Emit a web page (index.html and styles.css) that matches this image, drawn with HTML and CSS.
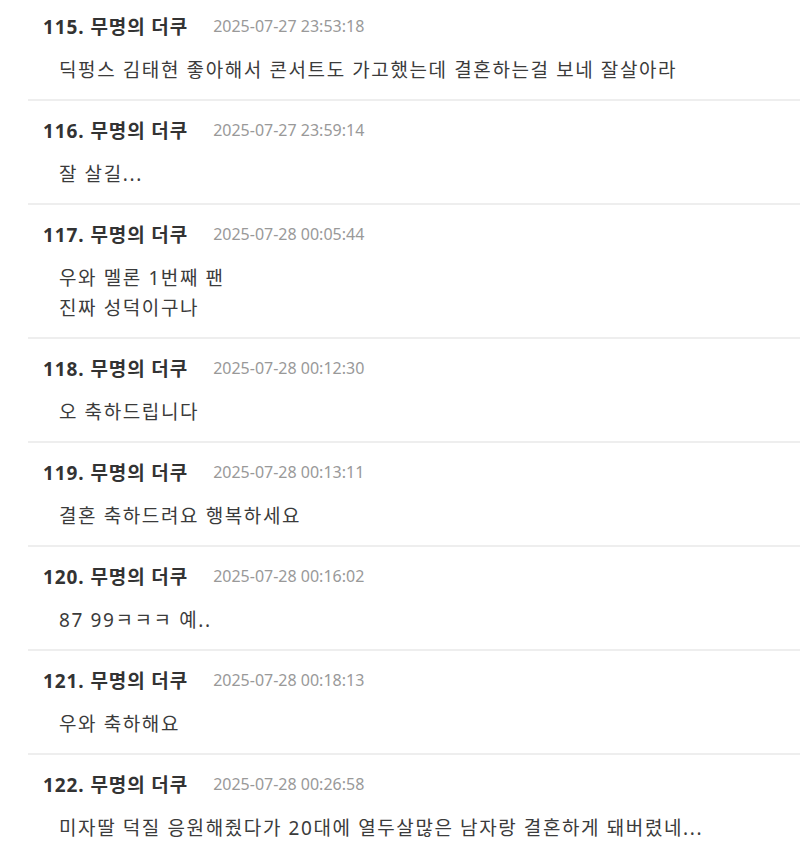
FILE: index.html
```html
<!doctype html>
<html lang="ko">
<head>
    <meta charset="UTF-8">
    <meta name="viewport" content="width=device-width, initial-scale=1.0">
    <title>댓글</title>
    <link rel="stylesheet" href="styles.css">
</head>
<body>
<div class="comment-list">
    <div class="comment">
        <div class="comment-head"><span class="comment-name">115. 무명의 더쿠</span><span class="comment-date">2025-07-27 23:53:18</span></div>
        <div class="comment-body">딕펑스 김태현 좋아해서 콘서트도 가고했는데 결혼하는걸 보네 잘살아라</div>
    </div>
    <div class="comment">
        <div class="comment-head"><span class="comment-name">116. 무명의 더쿠</span><span class="comment-date">2025-07-27 23:59:14</span></div>
        <div class="comment-body">잘 살길...</div>
    </div>
    <div class="comment">
        <div class="comment-head"><span class="comment-name">117. 무명의 더쿠</span><span class="comment-date">2025-07-28 00:05:44</span></div>
        <div class="comment-body">우와 멜론 1번째 팬<br>진짜 성덕이구나</div>
    </div>
    <div class="comment">
        <div class="comment-head"><span class="comment-name">118. 무명의 더쿠</span><span class="comment-date">2025-07-28 00:12:30</span></div>
        <div class="comment-body">오 축하드립니다</div>
    </div>
    <div class="comment">
        <div class="comment-head"><span class="comment-name">119. 무명의 더쿠</span><span class="comment-date">2025-07-28 00:13:11</span></div>
        <div class="comment-body">결혼 축하드려요 행복하세요</div>
    </div>
    <div class="comment">
        <div class="comment-head"><span class="comment-name">120. 무명의 더쿠</span><span class="comment-date">2025-07-28 00:16:02</span></div>
        <div class="comment-body">87 99ㅋㅋㅋ 예..</div>
    </div>
    <div class="comment">
        <div class="comment-head"><span class="comment-name">121. 무명의 더쿠</span><span class="comment-date">2025-07-28 00:18:13</span></div>
        <div class="comment-body">우와 축하해요</div>
    </div>
    <div class="comment">
        <div class="comment-head"><span class="comment-name">122. 무명의 더쿠</span><span class="comment-date">2025-07-28 00:26:58</span></div>
        <div class="comment-body">미자딸 덕질 응원해줬다가 20대에 열두살많은 남자랑 결혼하게 돼버렸네...</div>
    </div>
</div>
</body>
</html>
```

FILE: styles.css
```css
body {
    margin: 0;
    background-color: #ffffff;
    font-family: "Noto Sans", "Noto Sans CJK KR", sans-serif;
    overflow: hidden;
}
.comment-list {
    margin-top: -3px;
    margin-left: 28px;
}
.comment {
    padding: 15px 0 14px;
    border-bottom: 2px solid #eeeeee;
}
.comment-head {
    display: flex;
    align-items: center;
    height: 28px;
    padding-left: 15px;
}
.comment-name {
    font-size: 19px;
    font-weight: bold;
    letter-spacing: 0.9px;
    color: #333333;
}
.comment-date {
    margin-left: 25px;
    font-size: 16px;
    color: #999999;
}
.comment-body {
    margin-top: 15px;
    padding-left: 31px;
    font-size: 19px;
    line-height: 30px;
    letter-spacing: 1.6px;
    color: #3b3b3b;
}
```
